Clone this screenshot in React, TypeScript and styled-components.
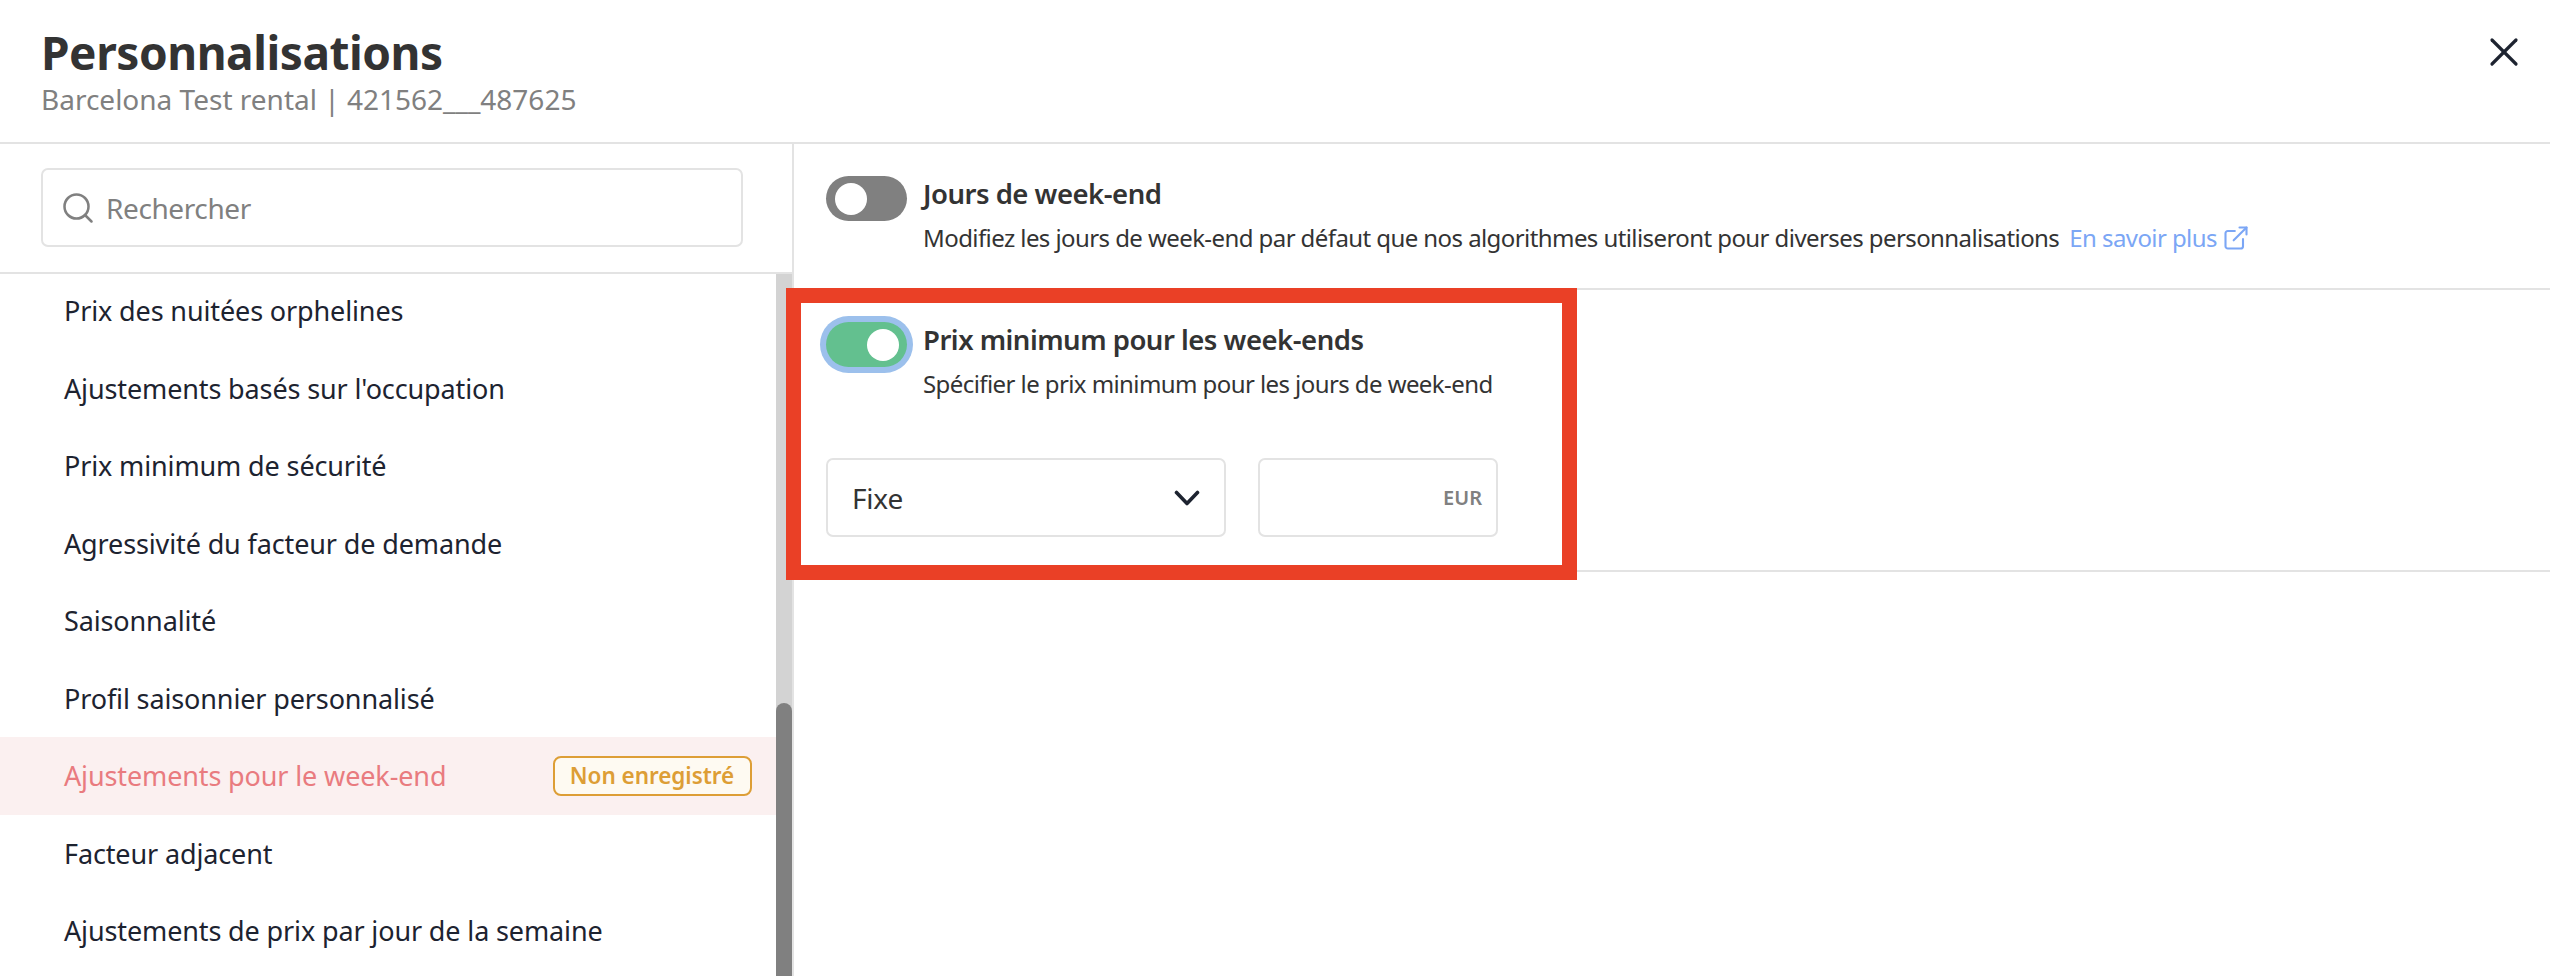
import React from "react";
import styled, { createGlobalStyle } from "styled-components";
import { Search, X, ExternalLink } from "lucide-react";

const FONT = `"Noto Sans", "Liberation Sans", sans-serif`;

const Global = createGlobalStyle`
  html, body { margin: 0; padding: 0; background: #fff; }
  * { box-sizing: border-box; }
  body { font-family: ${FONT}; }
`;

const Page = styled.div`
  position: relative;
  width: 2550px;
  height: 976px;
  overflow: hidden;
  background: #fff;
  display: flex;
  flex-direction: column;
`;

const Header = styled.header`
  height: 144px;
  flex: none;
  border-bottom: 2px solid #e3e3e3;
  padding: 25px 22px 0 41px;
  display: flex;
  justify-content: space-between;
  align-items: flex-start;
`;

const Title = styled.h1`
  margin: 0;
  font-size: 46px;
  line-height: 54px;
  font-weight: 700;
  color: #333;
  letter-spacing: -0.45px;
`;

const Subtitle = styled.div`
  font-size: 28px;
  line-height: 34px;
  margin-top: 3px;
  color: #808080;
  letter-spacing: 0;
`;

const Close = styled.button`
  border: 0;
  background: none;
  padding: 0;
  margin-top: 3px;
  display: flex;
  color: #1d2330;
`;

const Body = styled.div`
  flex: 1;
  min-height: 0;
  display: flex;
`;

const Sidebar = styled.aside`
  width: 794px;
  flex: none;
  border-right: 2px solid #e3e3e3;
  display: flex;
  flex-direction: column;
`;

const SearchArea = styled.div`
  height: 130px;
  flex: none;
  padding: 24px 49px 0 40.5px;
  border-bottom: 2px solid #e3e3e3;
`;

const SearchBox = styled.label`
  height: 79px;
  border: 2px solid #e3e3e3;
  border-radius: 7px;
  display: flex;
  align-items: center;
  gap: 10px;
  padding: 0 17.5px;
  color: #808080;
`;

const SearchInput = styled.input`
  border: 0;
  outline: 0;
  flex: 1;
  min-width: 0;
  padding: 0;
  font-family: ${FONT};
  font-size: 28px;
  letter-spacing: -0.4px;
  color: #333;
  &::placeholder { color: #808080; opacity: 1; }
`;

const ListWrap = styled.div`
  flex: 1;
  min-height: 0;
  display: flex;
  overflow: hidden;
`;

const List = styled.ul`
  flex: 1;
  margin: -2px 0 0;
  padding: 0;
  list-style: none;
`;

const Row = styled.li<{ $active?: boolean }>`
  height: 77.5px;
  display: flex;
  align-items: center;
  justify-content: space-between;
  padding: 0 24.5px 0 64px;
  font-size: 27px;
  letter-spacing: -0.13px;
  color: ${(p) => (p.$active ? "#e97b7f" : "#1d2330")};
  background: ${(p) => (p.$active ? "#fbf0f0" : "transparent")};
`;

const Badge = styled.span`
  height: 40px;
  width: 199px;
  border: 2px solid #dd9e36;
  border-radius: 8px;
  background: #fefaf2;
  color: #dd9e36;
  font-size: 22.5px;
  font-weight: 600;
  letter-spacing: -0.05px;
  display: flex;
  align-items: center;
  justify-content: center;
`;

const Track = styled.div`
  width: 16px;
  flex: none;
  background: #d3d3d3;
  display: flex;
  padding-top: 429px;
`;

const Thumb = styled.div`
  flex: 1;
  background: #808080;
  border-radius: 8px 8px 0 0;
`;

const Main = styled.main`
  flex: 1;
  min-width: 0;
`;

const Section = styled.section<{ $height: number }>`
  height: ${(p) => p.$height}px;
  border-bottom: 2px solid #e3e3e3;
  padding: 32px 33px 0 32px;
`;

const SettingHead = styled.div`
  display: flex;
  gap: 16px;
  align-items: flex-start;
`;

const Toggle = styled.span<{ $on?: boolean }>`
  width: 81px;
  height: 45px;
  flex: none;
  border-radius: 23px;
  display: flex;
  align-items: center;
  padding: 0 8.5px;
  justify-content: ${(p) => (p.$on ? "flex-end" : "flex-start")};
  background: ${(p) => (p.$on ? "#63c08f" : "#808080")};
  box-shadow: ${(p) => (p.$on ? "0 0 0 6px #9cc0ec" : "none")};
`;

const Knob = styled.span`
  width: 32px;
  height: 32px;
  border-radius: 50%;
  background: #fff;
`;

const SettingText = styled.div`
  padding-top: 1px;
`;

const SettingTitle = styled.div`
  font-size: 27.5px;
  line-height: 34px;
  font-weight: 600;
  color: #333;
  letter-spacing: -0.5px;
`;

const SettingDesc = styled.div`
  margin-top: 11px;
  font-size: 24px;
  line-height: 32px;
  color: #333;
  letter-spacing: -0.58px;
  display: flex;
  align-items: center;
  gap: 10px;
`;

const LearnMore = styled.a`
  color: #7ba6f5;
  display: inline-flex;
  align-items: center;
  gap: 5px;
`;

const Fields = styled.div`
  display: flex;
  gap: 32px;
  margin-top: 58px;
`;

const Select = styled.div`
  width: 400px;
  height: 79px;
  border: 2px solid #e3e3e3;
  border-radius: 7px;
  padding: 0 24px 0 24px;
  display: flex;
  align-items: center;
  justify-content: space-between;
  font-size: 28px;
  letter-spacing: -0.2px;
  color: #333;
`;

const Amount = styled.div`
  width: 240px;
  height: 79px;
  border: 2px solid #e3e3e3;
  border-radius: 7px;
  padding: 0 14px;
  display: flex;
  align-items: center;
  justify-content: flex-end;
  font-size: 20px;
  font-weight: 600;
  color: #808080;
`;

const Annotation = styled.div`
  position: absolute;
  left: 786px;
  top: 288px;
  width: 791px;
  height: 292px;
  border: 15px solid #ea4026;
  pointer-events: none;
`;

const items = [
  "Prix des nuitées orphelines",
  "Ajustements basés sur l'occupation",
  "Prix minimum de sécurité",
  "Agressivité du facteur de demande",
  "Saisonnalité",
  "Profil saisonnier personnalisé",
  "Ajustements pour le week-end",
  "Facteur adjacent",
  "Ajustements de prix par jour de la semaine",
];

export default function App() {
  return (
    <Page>
      <Global />
      <Header>
        <div>
          <Title>Personnalisations</Title>
          <Subtitle>Barcelona Test rental | 421562___487625</Subtitle>
        </div>
        <Close aria-label="Fermer">
          <X size={48} strokeWidth={1.6} />
        </Close>
      </Header>
      <Body>
        <Sidebar>
          <SearchArea>
            <SearchBox>
              <Search size={36} strokeWidth={1.7} />
              <SearchInput placeholder="Rechercher" />
            </SearchBox>
          </SearchArea>
          <ListWrap>
            <List>
              {items.map((t, i) => (
                <Row key={t} $active={i === 6}>
                  {t}
                  {i === 6 && <Badge>Non enregistré</Badge>}
                </Row>
              ))}
            </List>
            <Track>
              <Thumb />
            </Track>
          </ListWrap>
        </Sidebar>
        <Main>
          <Section $height={146}>
            <SettingHead>
              <Toggle>
                <Knob />
              </Toggle>
              <SettingText>
                <SettingTitle>Jours de week-end</SettingTitle>
                <SettingDesc>
                  Modifiez les jours de week-end par défaut que nos algorithmes utiliseront pour diverses personnalisations
                  <LearnMore>
                    En savoir plus <ExternalLink size={28} strokeWidth={1.8} />
                  </LearnMore>
                </SettingDesc>
              </SettingText>
            </SettingHead>
          </Section>
          <Section $height={282}>
            <SettingHead>
              <Toggle $on>
                <Knob />
              </Toggle>
              <SettingText>
                <SettingTitle>Prix minimum pour les week-ends</SettingTitle>
                <SettingDesc>Spécifier le prix minimum pour les jours de week-end</SettingDesc>
              </SettingText>
            </SettingHead>
            <Fields>
              <Select>
                Fixe
                <svg width="26" height="16" viewBox="0 0 26 16" fill="none" stroke="#1d2330" strokeWidth="3.6" strokeLinecap="round" strokeLinejoin="round">
                  <path d="M2.5 2.5 L13 13.5 L23.5 2.5" />
                </svg>
              </Select>
              <Amount>EUR</Amount>
            </Fields>
          </Section>
        </Main>
      </Body>
      <Annotation />
    </Page>
  );
}
